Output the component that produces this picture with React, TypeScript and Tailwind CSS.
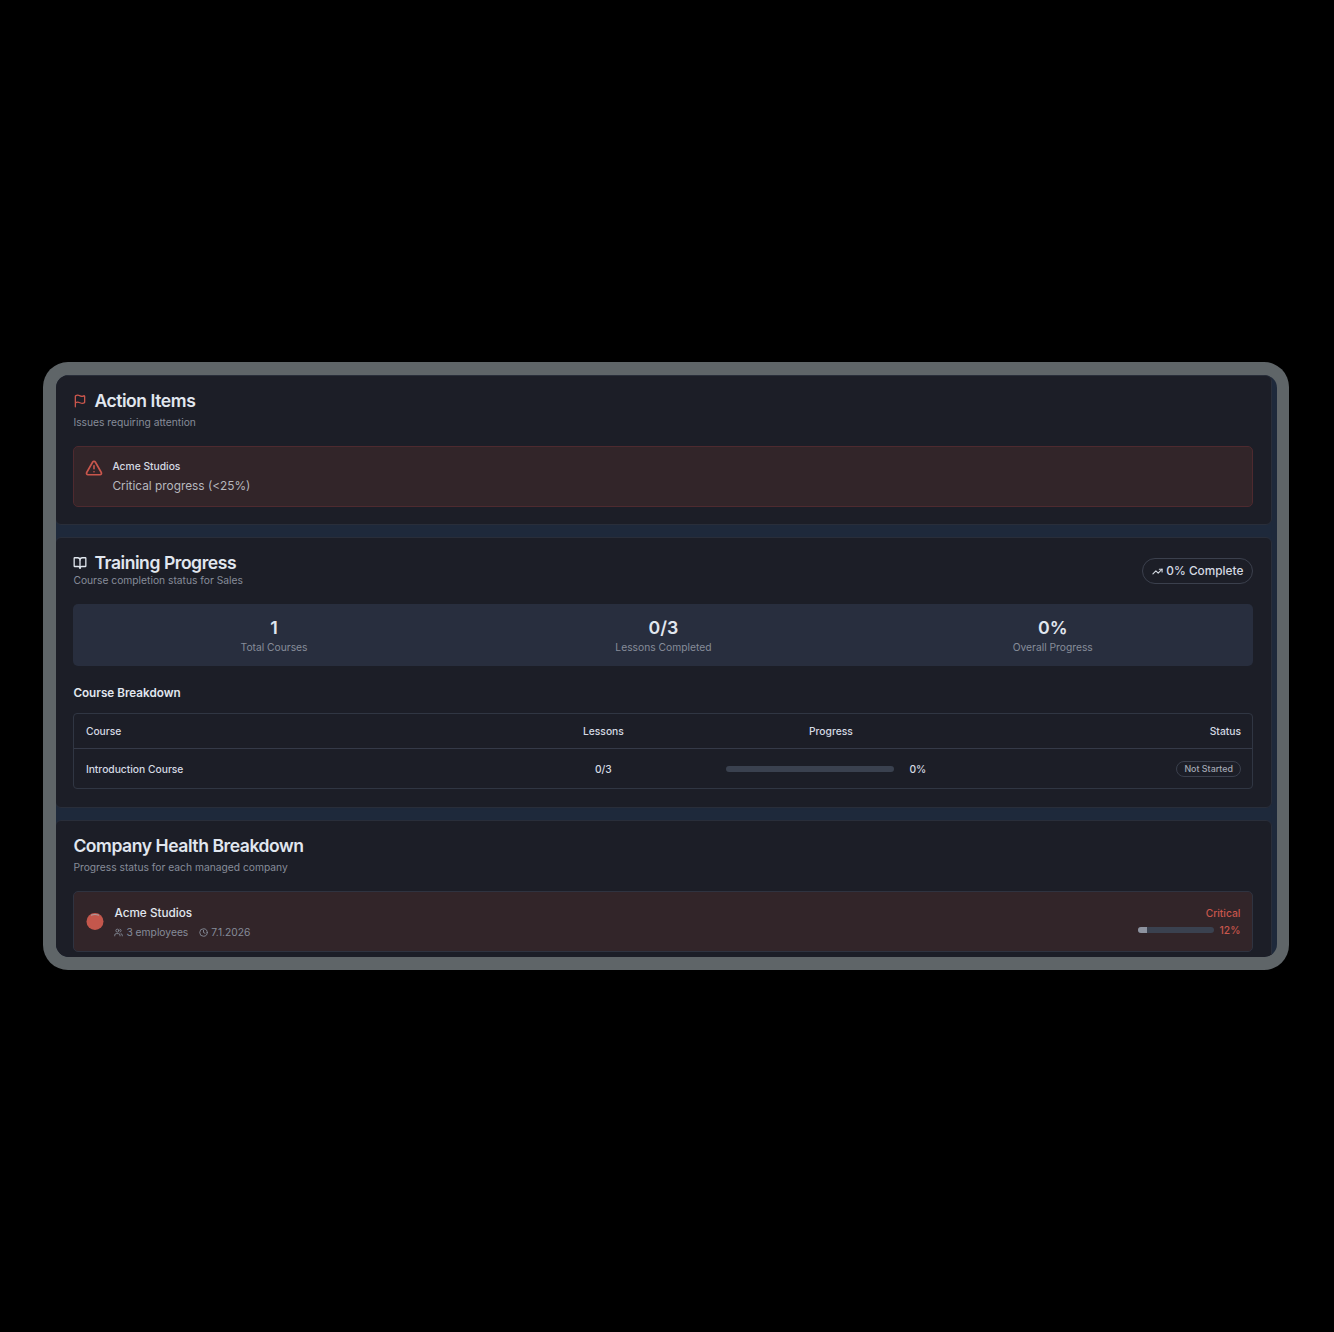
import type { ReactNode } from 'react'
import { AlertTriangle, BookOpen, Clock, Flag, TrendingUp, Users } from 'lucide-react'

const stats = [
  { value: '1', label: 'Total Courses' },
  { value: '0/3', label: 'Lessons Completed' },
  { value: '0%', label: 'Overall Progress' },
]

const courses = [{ name: 'Introduction Course', lessons: '0/3', progress: 0, status: 'Not Started' }]

const companies = [
  { name: 'Acme Studios', employees: 3, date: '7.1.2026', health: 'Critical', progress: 12 },
]

function Card({ children, className = '' }: { children: ReactNode; className?: string }) {
  return (
    <section className={`rounded-md border border-[#292e3a] bg-[#1c1e27] pt-4 pr-[17.6px] pl-[17.4px] ${className}`}>
      {children}
    </section>
  )
}

function CardTitle({ icon, children }: { icon?: ReactNode; children: ReactNode }) {
  return (
    <h2 className="flex h-[18px] items-center gap-[6px] text-[17.55px] leading-[18px] font-semibold tracking-[-0.44px] text-[#e1e7ef]">
      {icon}
      {children}
    </h2>
  )
}

function Bar({ value, className }: { value: number; className: string }) {
  return (
    <div className={`h-[6px] overflow-hidden rounded-full bg-[#3a414f] ${className}`}>
      <div className="h-full bg-[#8e939f]" style={{ width: `${value}%` }} />
    </div>
  )
}

export default function App() {
  return (
    <main className="h-[1332px] w-[1334px] overflow-hidden bg-black pt-[362px] pl-[43px] font-[Inter,sans-serif] text-[10.27px] leading-4 text-[#d5dae3]">
      <div className="h-[608px] w-[1246px] rounded-[25px] bg-[#5f6568] py-[13px] pr-3 pl-[13px]">
        <div className="h-full overflow-hidden rounded-[13px] bg-[#1e293b]">
          <div className="-ml-px flex w-[1217px] flex-col gap-3">
            <Card className="h-[150px]">
              <CardTitle icon={<Flag className="mr-px size-[14px] text-[#c9564c]" strokeWidth={2.2} />}>Action Items</CardTitle>
              <p className="mt-1 text-[#868c99]">Issues requiring attention</p>
              <div className="mt-4 flex h-[61px] gap-[9px] rounded-[5px] border border-[#4e2a2f] bg-[#322529] px-[11px] pt-[11px]">
                <AlertTriangle className="mt-px size-[18px]" color="#c9564c" strokeWidth={2.2} />
                <div>
                  <p className="font-medium">Acme Studios</p>
                  <p className="mt-1 text-[11.85px] text-[#b7b8be]">Critical progress (&lt;25%)</p>
                </div>
              </div>
            </Card>

            <Card className="h-[271px]">
              <div className="flex items-start justify-between">
                <div>
                  <CardTitle icon={<BookOpen className="mr-px size-[14px]" strokeWidth={2.2} />}>Training Progress</CardTitle>
                  <p className="text-[#868c99]">Course completion status for Sales</p>
                </div>
                <span className="mt-[4px] flex h-[26px] items-center gap-[3px] rounded-full border border-[#3b404d] px-[9px] text-[11.85px] font-medium">
                  <TrendingUp className="size-[11px]" strokeWidth={2.4} />
                  0% Complete
                </span>
              </div>

              <div className="mt-4 grid h-[62px] grid-cols-3 gap-3 rounded-[5px] bg-[#282e3e] px-3 pt-[14px] text-center">
                {stats.map((s) => (
                  <div key={s.label}>
                    <p className="text-[17.8px] leading-5 font-semibold text-[#e1e7ef]">{s.value}</p>
                    <p className="mt-px text-[#868c99]">{s.label}</p>
                  </div>
                ))}
              </div>

              <h3 className="mt-[19px] text-[11.7px] font-semibold text-[#e1e7ef]">Course Breakdown</h3>

              <div className="mt-3 h-[76px] rounded-[4px] border border-[#303643]">
                <div className="grid h-[35px] grid-cols-[457px_121px_334px_1fr] items-center border-b border-[#353a48] px-[11.5px] font-medium">
                  <span>Course</span>
                  <span className="text-center">Lessons</span>
                  <span className="text-center">Progress</span>
                  <span className="text-right">Status</span>
                </div>
                {courses.map((c) => (
                  <div key={c.name} className="grid h-[39px] grid-cols-[457px_121px_334px_1fr] items-center px-[11.5px] font-medium">
                    <span>{c.name}</span>
                    <span className="text-center">{c.lessons}</span>
                    <div className="flex items-center justify-center gap-[6px]">
                      <Bar value={c.progress} className="w-[168px]" />
                      <span className="w-[35px] text-center">{c.progress}%</span>
                    </div>
                    <span className="flex h-4 items-center justify-self-end rounded-full border border-[#3b404d] px-[7px] text-[8.9px] text-[#a3a8b3]">
                      {c.status}
                    </span>
                  </div>
                ))}
              </div>
            </Card>

            <Card className="h-[160px]">
              <CardTitle>Company Health Breakdown</CardTitle>
              <p className="mt-1 text-[#868c99]">Progress status for each managed company</p>
              {companies.map((c) => (
                <div key={c.name} className="mt-4 flex h-[61px] items-center justify-between rounded-[5px] border border-[#2f3340] bg-[#322529] px-3">
                  <div className="flex items-center gap-[10px]">
                    <svg className="size-[18px]" viewBox="0 0 18 18">
                      <circle cx="9" cy="8.5" r="8.5" fill="#c4574c" />
                      <path d="M5 2.2Q9 .8 13 2.2" fill="none" stroke="#a99fa2" strokeWidth="1.1" />
                    </svg>
                    <div className="pt-[2px]">
                      <p className="text-[11.75px] font-medium text-[#e1e7ef]">{c.name}</p>
                      <div className="mt-[3px] flex items-center text-[#868c99]">
                        <Users className="mr-[3px] size-[9px]" strokeWidth={2.4} />
                        {c.employees} employees
                        <Clock className="mr-[3px] ml-[11px] size-[9px]" strokeWidth={2.4} />
                        {c.date}
                      </div>
                    </div>
                  </div>
                  <div className="text-right font-medium text-[#c9564c]">
                    <p>{c.health}</p>
                    <div className="mt-px flex items-center gap-[6px]">
                      <Bar value={c.progress} className="w-[76px]" />
                      {c.progress}%
                    </div>
                  </div>
                </div>
              ))}
            </Card>
          </div>
        </div>
      </div>
    </main>
  )
}
